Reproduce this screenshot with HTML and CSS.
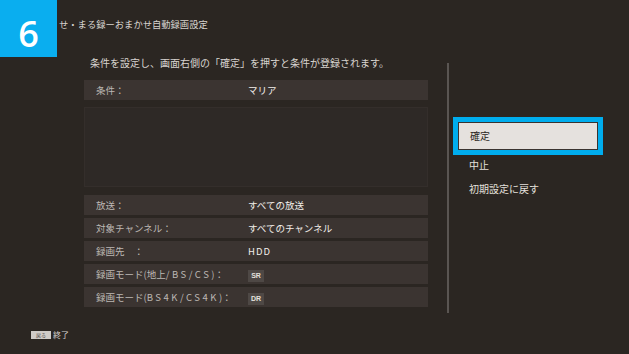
FILE: index.html
```html
<!DOCTYPE html>
<html lang="ja">
<head>
  <meta charset="UTF-8">
  <title>おまかせ・まる録ーおまかせ自動録画設定</title>
  <link rel="stylesheet" href="styles.css">
</head>
<body>
  <header class="top">
    <div class="step">6</div>
    <h1 class="title">せ・まる録ーおまかせ自動録画設定</h1>
  </header>

  <main class="screen">
    <section class="form">
      <p class="lead">条件を設定し、画面右側の「確定」を押すと条件が登録されます。</p>

      <div class="row">
        <span class="label">条件：</span>
        <span class="value">マリア</span>
      </div>
      <div class="pane"></div>

      <div class="rows">
        <div class="row">
          <span class="label">放送：</span>
          <span class="value">すべての放送</span>
        </div>
        <div class="row">
          <span class="label">対象チャンネル：</span>
          <span class="value">すべてのチャンネル</span>
        </div>
        <div class="row">
          <span class="label">録画先　：</span>
          <span class="value latin">HDD</span>
        </div>
        <div class="row">
          <span class="label">録画モード(地上<span class="latin">/BS/CS</span>)：</span>
          <span class="value"><span class="tag">SR</span></span>
        </div>
        <div class="row">
          <span class="label">録画モード(<span class="latin">BS4K/CS4K</span>)：</span>
          <span class="value"><span class="tag">DR</span></span>
        </div>
      </div>
    </section>

    <div class="divider"></div>

    <nav class="menu">
      <div class="item focus"><span>確定</span></div>
      <div class="item">中止</div>
      <div class="item">初期設定に戻す</div>
    </nav>
  </main>

  <footer class="bottom">
    <span class="key">戻る</span>
    <span class="key-label">終了</span>
  </footer>
</body>
</html>
```

FILE: styles.css
```css
body {
  margin: 0;
  width: 629px;
  height: 354px;
  overflow: hidden;
  background: #2b2622;
  color: #e8e4e0;
  font-family: "Noto Sans CJK JP", "Noto Sans", sans-serif;
}

/* header */
.top {
  display: flex;
  align-items: flex-start;
  height: 57px;
}

.step {
  width: 57px;
  height: 57px;
  box-sizing: border-box;
  padding-top: 14px;
  background: #0aaeef;
  color: #ffffff;
  font-family: "Open Sans", sans-serif;
  font-size: 36px;
  font-weight: 600;
  line-height: 40px;
  text-align: center;
}

.title {
  margin: 18px 0 0 2px;
  font-size: 9.3px;
  font-weight: normal;
  line-height: 12px;
  color: #d8d4d0;
}

/* main area */
.screen {
  display: flex;
  height: 260px;
}

.form {
  width: 344px;
  margin-left: 84px;
}

.lead {
  margin: 0 0 11px 6px;
  font-size: 10px;
  line-height: 12px;
  color: #d8d4d0;
}

.row {
  display: flex;
  align-items: center;
  height: 20px;
  background: #3b3431;
  font-size: 9.5px;
}

.label {
  width: 152px;
  padding-left: 12px;
  color: #bdb8b4;
}

.value {
  color: #f2eeea;
}

.latin {
  letter-spacing: 2.5px;
}

.value.latin {
  letter-spacing: 1px;
}

.tag {
  display: inline-block;
  width: 16px;
  height: 12px;
  background: #4e4845;
  color: #e4e0dc;
  font-family: "Liberation Sans", sans-serif;
  font-size: 7px;
  font-weight: bold;
  line-height: 12px;
  text-align: center;
  letter-spacing: 0;
}

.pane {
  height: 78px;
  margin: 7px 0 8px;
  background: #2e2926;
  border: 1px solid #342e2b;
}

.rows {
  display: flex;
  flex-direction: column;
  gap: 3px;
}

.divider {
  width: 2px;
  height: 250px;
  margin: 6px 0 0 19px;
  background: #5a5552;
}

/* right menu */
.menu {
  width: 150px;
  margin: 60px 0 0 4px;
}

.item {
  height: 24px;
  padding-left: 16px;
  font-size: 10px;
  line-height: 24px;
  color: #e4e0dc;
}

.item.focus {
  height: 38px;
  box-sizing: border-box;
  margin-bottom: -2px;
  padding: 0;
  border: 5px solid #00adee;
}

.item.focus span {
  display: block;
  height: 26px;
  padding-left: 11px;
  border: 1px solid #3a3330;
  background: #e5e1de;
  color: #2a2522;
  line-height: 26px;
}

/* footer */
.bottom {
  display: flex;
  align-items: center;
  gap: 2px;
  padding: 13px 0 0 31px;
}

.key {
  width: 20px;
  height: 8px;
  background: #cfcbc7;
  color: #4a4542;
  font-size: 5px;
  line-height: 8px;
  text-align: center;
}

.key-label {
  font-size: 8px;
  line-height: 10px;
  color: #d8d4d0;
}
```
